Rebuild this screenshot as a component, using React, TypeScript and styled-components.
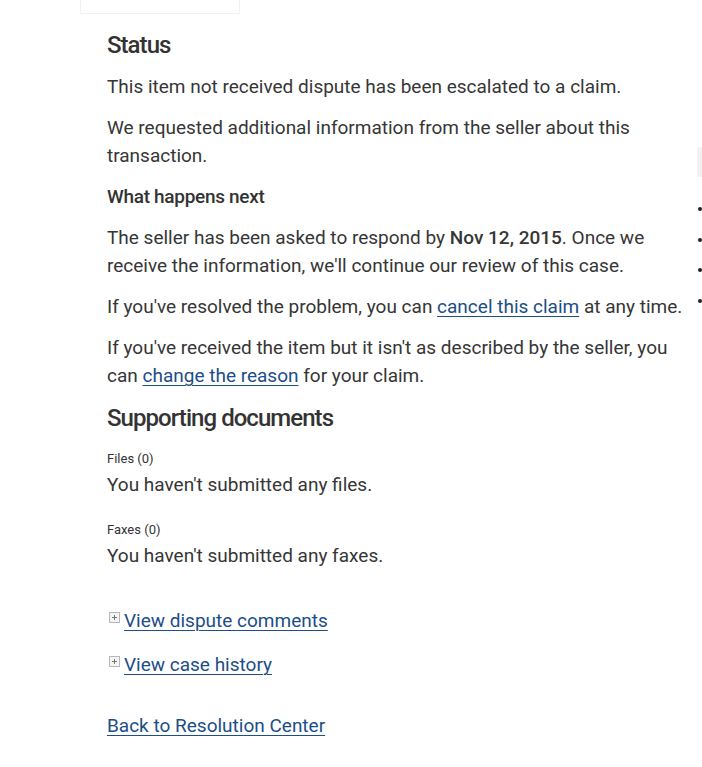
import React from "react";
import styled, { createGlobalStyle } from "styled-components";

const Global = createGlobalStyle`
  html, body { margin: 0; padding: 0; background: #fff; overflow: hidden; }
  body { font-family: Roboto, "Liberation Sans", Arial, sans-serif; color: #333; }
`;

const Page = styled.div`
  display: flex;
  width: 702px;
  height: 767px;
  overflow: hidden;
  padding-left: 107px;
  box-sizing: border-box;
`;

const Main = styled.main`
  width: 590px;
  flex: none;
  display: flex;
  flex-direction: column;
`;

const TopCard = styled.div`
  margin: -25px 0 0 -27px;
  width: 160px;
  height: 39px;
  border: 1px solid #f1f1f1;
  border-top: none;
  box-sizing: border-box;
  padding: 1px 0 0 27px;
  font-size: 19px;
  line-height: 28px;
  color: #333;
  white-space: nowrap;
`;

const H2 = styled.h2`
  margin: 0;
  font-size: 24px;
  font-weight: 500;
  letter-spacing: -0.95px;
  line-height: 30px;
  color: #333;
`;

const P = styled.p`
  margin: 0;
  font-size: 19px;
  line-height: 28px;
  color: #363636;
`;

const Strong = styled.b`
  font-weight: 500;
`;

const H3 = styled.h3`
  margin: 0;
  font-size: 19px;
  font-weight: 500;
  line-height: 28px;
  letter-spacing: -0.3px;
  color: #333;
`;

const Label = styled.div`
  font-size: 13px;
  line-height: 16px;
  color: #333;
`;

const A = styled.a`
  color: #1c4e87;
  text-decoration: underline;
  text-underline-offset: 3px;
  text-decoration-thickness: 1px;
  cursor: pointer;
`;

const Stack = styled.div<{ $gap: number; $top: number }>`
  display: flex;
  flex-direction: column;
  gap: ${(p) => p.$gap}px;
  margin-top: ${(p) => p.$top}px;
`;

const ToggleRow = styled.div`
  display: flex;
  align-items: flex-start;
  font-size: 19px;
  line-height: 28px;
`;

const PlusBox = styled.span`
  width: 9px;
  height: 9px;
  border: 1px solid #b8b8b8;
  background: #f4f4f4;
  margin: 5px 4px 0 2px;
  position: relative;
  flex: none;
  &::before, &::after {
    content: "";
    position: absolute;
    background: #777;
  }
  &::before { left: 2px; top: 4px; width: 5px; height: 1px; }
  &::after { left: 4px; top: 2px; width: 1px; height: 5px; }
`;

const Aside = styled.aside`
  flex: none;
  width: 40px;
  display: flex;
  flex-direction: column;
  padding-top: 147px;
`;

const GrayTab = styled.div`
  width: 40px;
  height: 30px;
  background: #f2f2f2;
`;

const DotList = styled.ul`
  list-style: none;
  margin: 30px 0 0 0;
  padding: 0;
  display: flex;
  flex-direction: column;
  gap: 26.5px;
`;

const Dot = styled.li`
  width: 4px;
  height: 4px;
  border-radius: 50%;
  background: #222;
  margin-left: 1px;
`;

export default function App() {
  return (
    <>
      <Global />
      <Page>
        <Main>
          <TopCard>Expected by Oct 29, 2015</TopCard>
          <Stack $gap={0} $top={16}>
            <H2>Status</H2>
          </Stack>
          <Stack $gap={13} $top={13}>
            <P>This item not received dispute has been escalated to a claim.</P>
            <P>We requested additional information from the seller about this transaction.</P>
            <H3>What happens next</H3>
            <P>
              The seller has been asked to respond by <Strong>Nov 12, 2015</Strong>. Once we
              receive the information, we'll continue our review of this case.
            </P>
            <P>
              If you've resolved the problem, you can <A>cancel this claim</A> at any time.
            </P>
            <P>
              If you've received the item but it isn't as described by the seller, you can{" "}
              <A>change the reason</A> for your claim.
            </P>
          </Stack>
          <Stack $gap={0} $top={13}>
            <H2>Supporting documents</H2>
          </Stack>
          <Stack $gap={4} $top={18}>
            <Label>Files (0)</Label>
            <P>You haven't submitted any files.</P>
          </Stack>
          <Stack $gap={4} $top={23}>
            <Label>Faxes (0)</Label>
            <P>You haven't submitted any faxes.</P>
          </Stack>
          <Stack $gap={16} $top={37}>
            <ToggleRow>
              <PlusBox />
              <A>View dispute comments</A>
            </ToggleRow>
            <ToggleRow>
              <PlusBox />
              <A>View case history</A>
            </ToggleRow>
          </Stack>
          <Stack $gap={0} $top={33}>
            <P>
              <A>Back to Resolution Center</A>
            </P>
          </Stack>
        </Main>
        <Aside>
          <GrayTab />
          <DotList>
            <Dot />
            <Dot />
            <Dot />
            <Dot />
          </DotList>
        </Aside>
      </Page>
    </>
  );
}
